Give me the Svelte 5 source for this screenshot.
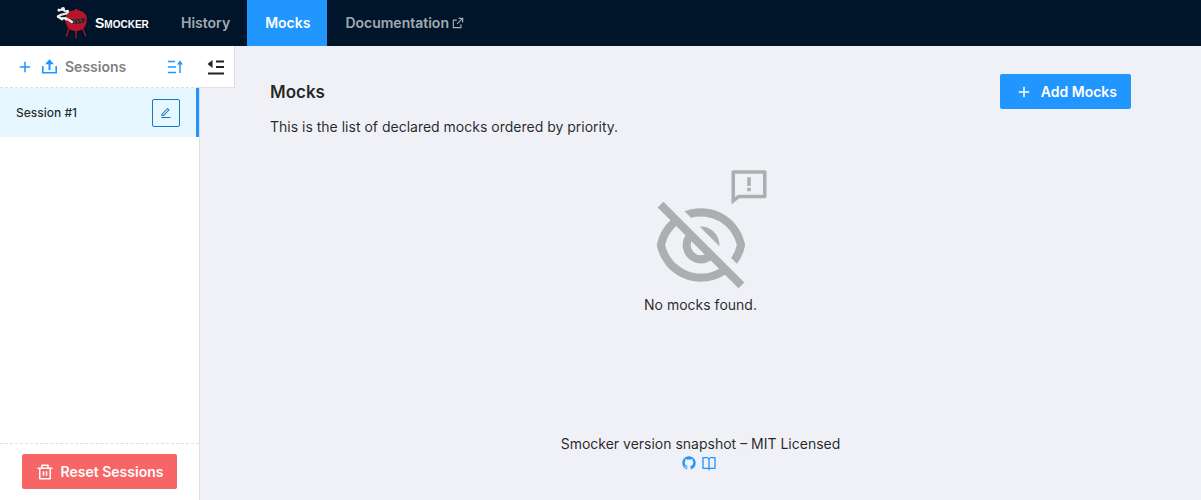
<script>
  const icons = {
    add: 'M11 11V5h2v6h6v2h-6v6h-2v-6H5v-2z',
    external:
      'M10 6v2H5v11h11v-5h2v6a1 1 0 0 1-1 1H4a1 1 0 0 1-1-1V7a1 1 0 0 1 1-1h6zm11-3v8h-2V6.413l-7.793 7.794-1.414-1.414L17.585 5H13V3h8z',
    edit:
      'M6.414 16L16.556 5.858l-1.414-1.414L5 14.586V16h1.414zm.829 2H3v-4.243L14.435 2.322a1 1 0 0 1 1.414 0l2.829 2.829a1 1 0 0 1 0 1.414L7.243 18zM3 20h18v2H3v-2z',
    bin:
      'M17 6h5v2h-2v13a1 1 0 0 1-1 1H5a1 1 0 0 1-1-1V8H2V6h5V3a1 1 0 0 1 1-1h8a1 1 0 0 1 1 1v3zm1 2H6v12h12V8zm-9 3h2v6H9v-6zm4 0h2v6h-2v-6zM9 4v2h6V4H9z',
    eyeOff:
      'M17.882 19.297A10.949 10.949 0 0 1 12 21c-5.392 0-9.878-3.88-10.819-9a10.982 10.982 0 0 1 3.34-6.066L1.392 2.808l1.415-1.415 19.799 19.8-1.415 1.414-3.31-3.31zM5.935 7.35A8.965 8.965 0 0 0 3.223 12a9.005 9.005 0 0 0 13.201 5.838l-2.028-2.028A4.5 4.5 0 0 1 8.19 9.604L5.935 7.35zm6.979 6.978l-3.242-3.242a2.5 2.5 0 0 0 3.241 3.241zm7.893 2.264l-1.431-1.43A8.935 8.935 0 0 0 20.777 12 9.005 9.005 0 0 0 9.552 5.338L7.974 3.76C9.221 3.27 10.58 3 12 3c5.392 0 9.878 3.88 10.819 9a10.947 10.947 0 0 1-2.012 4.592zm-9.084-9.084a4.5 4.5 0 0 1 4.769 4.769l-4.77-4.769z',
    feedback:
      'M6.455 19L2 22.5V4a1 1 0 0 1 1-1h18a1 1 0 0 1 1 1v14a1 1 0 0 1-1 1H6.455zm-.692-2H20V5H4v13.385L5.763 17zM11 13h2v2h-2v-2zm0-6h2v5h-2V7z',
    github:
      'M12 2C6.475 2 2 6.475 2 12a9.994 9.994 0 0 0 6.838 9.488c.5.087.687-.213.687-.476 0-.237-.013-1.024-.013-1.862-2.512.463-3.162-.612-3.362-1.175-.113-.288-.6-1.175-1.025-1.413-.35-.187-.85-.65-.013-.662.788-.013 1.35.725 1.538 1.025.9 1.512 2.338 1.087 2.912.825.088-.65.35-1.087.638-1.337-2.225-.25-4.55-1.113-4.55-4.938 0-1.088.387-1.987 1.025-2.688-.1-.25-.45-1.275.1-2.65 0 0 .837-.262 2.75 1.026a9.28 9.28 0 0 1 2.5-.338c.85 0 1.7.112 2.5.337 1.912-1.3 2.75-1.024 2.75-1.024.55 1.375.2 2.4.1 2.65.637.7 1.025 1.587 1.025 2.687 0 3.838-2.337 4.688-4.562 4.938.362.312.675.912.675 1.85 0 1.337-.013 2.412-.013 2.75 0 .262.188.574.688.474A10.016 10.016 0 0 0 22 12c0-5.525-4.475-10-10-10z',
    book:
      'M13 21v2h-2v-2H3a1 1 0 0 1-1-1V4a1 1 0 0 1 1-1h6a3.99 3.99 0 0 1 3 1.354A3.99 3.99 0 0 1 15 3h6a1 1 0 0 1 1 1v16a1 1 0 0 1-1 1h-8zm7-2V5h-5a2 2 0 0 0-2 2v12h7zm-9 0V7a2 2 0 0 0-2-2H4v14h7z'
  };
  const sessions = ['Session #1'];
</script>

{#snippet icon(name, size)}
  <svg viewBox="0 0 24 24" width={size} height={size} fill="currentColor" aria-hidden="true"><path d={icons[name]} /></svg>
{/snippet}

<div class="page">
  <header>
    <a class="brand" href="#home">
      <svg width="34" height="34" viewBox="0 0 34 34" aria-hidden="true">
        <path d="M13 22l-2.500 8M20 23v9M26.500 22l3 7.500" fill="none" stroke="#a5162a" stroke-width="1.400" stroke-linecap="round" />
        <path d="M9 13C9.500 7.500 14 4.500 19 4.200V3h2.500v1.200C27 4.800 31 8 31 13l-.5 1.500C30.500 20.500 26.500 25 20 25S9.800 20.500 9.500 14.500z" fill="#b8152b" />
        <path d="M14 12.800c5 .8 10 .4 15.500-1L28 16.500c-4 1.200-8 1.300-12 1z" fill="#33262b" />
        <path d="M17 13.500l2 3M20.500 13.500l2 3M24 13.200l2 3" stroke="#756063" stroke-width=".7" />
        <path d="M3 4.200L7.500 3.200 8.500 5l3 .5-1 2L4.500 8.800 2.500 11l2.500 1.500 4-.5 4 2 3 2" fill="none" stroke="#e9edf0" stroke-width="2.200" stroke-linecap="round" stroke-linejoin="round" />
        <g fill="#e9edf0">
          <circle cx="3" cy="4" r="1.600" />
          <circle cx="7" cy="3" r="2" />
          <circle cx="11.500" cy="5.500" r="1.700" />
          <circle cx="2.500" cy="10.500" r="1.700" />
          <circle cx="6" cy="12.700" r="1.700" />
          <circle cx="10" cy="13" r="1.500" />
        </g>
      </svg>
      <span>Smocker</span>
    </a>
    <nav>
      <a href="#history">History</a>
      <a class="active" href="#mocks" aria-current="page">Mocks</a>
      <a href="#docs">Documentation {@render icon('external', 14)}</a>
    </nav>
  </header>

  <div class="body">
    <aside>
      <div class="side-head">
        <button class="tool" aria-label="Add session">{@render icon('add', 18)}</button>
        <button class="tool" aria-label="Upload sessions">
          <svg width="15" height="16" viewBox="0 0 15 16" aria-hidden="true">
            <path d="M.8 7v6.800h13.400V7" fill="none" stroke="currentColor" stroke-width="1.600" />
            <path d="M7.500 .2l4.500 5H8.500v6h-2v-6H3z" fill="currentColor" />
          </svg>
        </button>
        <h2>Sessions</h2>
        <button class="tool sort" aria-label="Sort sessions">
          <svg width="16" height="16" viewBox="0 0 16 16" aria-hidden="true">
            <path d="M1 2.500h7M1 8h8M1 13.500h8M13 14V2.500" fill="none" stroke="currentColor" stroke-width="1.500" />
            <path d="M13 1.500l3 4h-6z" fill="currentColor" />
          </svg>
        </button>
        <button class="collapse" aria-label="Collapse sidebar">
          <svg width="18" height="18" viewBox="0 0 18 18" aria-hidden="true">
            <path d="M9 3.500h8M9 9h8M1 15.500h16" fill="none" stroke="currentColor" stroke-width="1.800" />
            <path d="M5.500 2v8L.5 6z" fill="currentColor" />
          </svg>
        </button>
      </div>
      <ul>
        {#each sessions as session}
          <li>
            <a href="#session">{session}</a>
            <button aria-label="Edit session">{@render icon('edit', 12)}</button>
          </li>
        {/each}
      </ul>
      <div class="side-foot">
        <button class="btn danger">{@render icon('bin', 18)}Reset Sessions</button>
      </div>
    </aside>

    <div class="content">
      <main>
        <div class="title">
          <h1>Mocks</h1>
          <button class="btn primary">{@render icon('add', 18)}Add Mocks</button>
        </div>
        <p>This is the list of declared mocks ordered by priority.</p>
        <div class="empty">
          <div class="art">
            {@render icon('eyeOff', 98)}
            <span class="bubble">{@render icon('feedback', 42)}</span>
          </div>
          <span>No mocks found.</span>
        </div>
      </main>
      <footer>
        <span>Smocker version snapshot – MIT Licensed</span>
        <div class="links">
          <a href="#github" aria-label="GitHub">{@render icon('github', 16)}</a>
          <a href="#book" aria-label="Documentation">{@render icon('book', 16)}</a>
        </div>
      </footer>
    </div>
  </div>
</div>

<style>
  :global(body) {
    margin: 0;
  }
  .page {
    display: flex;
    flex-direction: column;
    min-height: 100vh;
    background: #f0f1f6;
    color: rgba(0, 0, 0, 0.85);
    font: 14px/22px Inter, sans-serif;
  }
  .page * {
    box-sizing: border-box;
  }
  svg {
    display: block;
    flex: none;
  }
  a {
    color: inherit;
    text-decoration: none;
  }
  button {
    border: 0;
    background: none;
    padding: 0;
    color: inherit;
    font: inherit;
    cursor: pointer;
  }
  header {
    display: flex;
    height: 46px;
    padding-left: 56px;
    background: #001529;
  }
  .brand {
    display: flex;
    align-items: center;
    gap: 5px;
    min-width: 107px;
    color: #fff;
    font-family: "Liberation Sans", sans-serif;
    font-weight: 700;
    font-variant: small-caps;
  }
  nav {
    display: flex;
    color: rgba(255, 255, 255, 0.65);
    font-weight: 600;
  }
  nav a {
    display: flex;
    align-items: center;
    gap: 2px;
    padding: 0 17px 0 18px;
  }
  nav .active {
    background: #2196ff;
    color: #fff;
  }
  .body {
    display: flex;
    flex: 1;
  }
  aside {
    display: flex;
    flex-direction: column;
    width: 200px;
    flex: none;
    border-right: 1px solid #dedfe3;
    background: #fff;
  }
  .side-head {
    position: relative;
    display: flex;
    align-items: center;
    gap: 8px;
    height: 42px;
    padding: 0 16px;
    border-bottom: 1px dashed #dedede;
  }
  h2 {
    margin: 0;
    font-size: 14px;
    font-weight: 600;
    color: #808080;
  }
  .tool {
    color: #2196ff;
  }
  .sort {
    margin-left: auto;
  }
  .collapse {
    position: absolute;
    top: 0;
    left: 199px;
    display: flex;
    align-items: center;
    width: 36px;
    height: 42px;
    padding-left: 8px;
    border: solid #dedfe3;
    border-width: 0 1px 1px 0;
    background: #fff;
    color: #222;
  }
  ul {
    flex: 1;
    margin: 0;
    padding: 0;
    list-style: none;
  }
  li {
    display: flex;
    align-items: center;
    justify-content: space-between;
    height: 49px;
    padding: 0 16px;
    border-right: 3px solid #2196ff;
    background: #e6f7ff;
    font-size: 12px;
    font-weight: 500;
  }
  li button {
    display: grid;
    place-items: center;
    width: 28px;
    height: 28px;
    border: 1px solid #1677c8;
    border-radius: 2px;
    color: #1677c8;
  }
  .side-foot {
    display: flex;
    justify-content: center;
    padding: 10px 0 11px;
    border-top: 1px dashed #dedede;
  }
  .btn {
    display: flex;
    align-items: center;
    height: 35px;
    border-radius: 2px;
    color: #fff;
    font-weight: 600;
  }
  .danger {
    gap: 7px;
    padding: 0 14px;
    background: #f76566;
  }
  .primary {
    gap: 8px;
    padding: 0 14px 0 15px;
    background: #2196ff;
  }
  .content {
    display: flex;
    flex: 1;
    flex-direction: column;
    justify-content: space-between;
  }
  main {
    padding: 28px 70px 0;
  }
  .title {
    display: flex;
    align-items: center;
    justify-content: space-between;
  }
  h1 {
    margin: 0;
    font-size: 17px;
    font-weight: 600;
  }
  p {
    margin: 7px 0 0;
  }
  .empty {
    display: flex;
    flex-direction: column;
    align-items: center;
    padding-top: 58px;
  }
  .art {
    position: relative;
    color: #adaeb0;
  }
  .bubble {
    position: absolute;
    top: -31px;
    left: 76px;
  }
  footer {
    display: flex;
    flex-direction: column;
    align-items: center;
    padding: 24px;
  }
  .links {
    display: flex;
    gap: 4px;
    padding: 0 4px 5px 0;
    color: #2196ff;
  }
</style>
